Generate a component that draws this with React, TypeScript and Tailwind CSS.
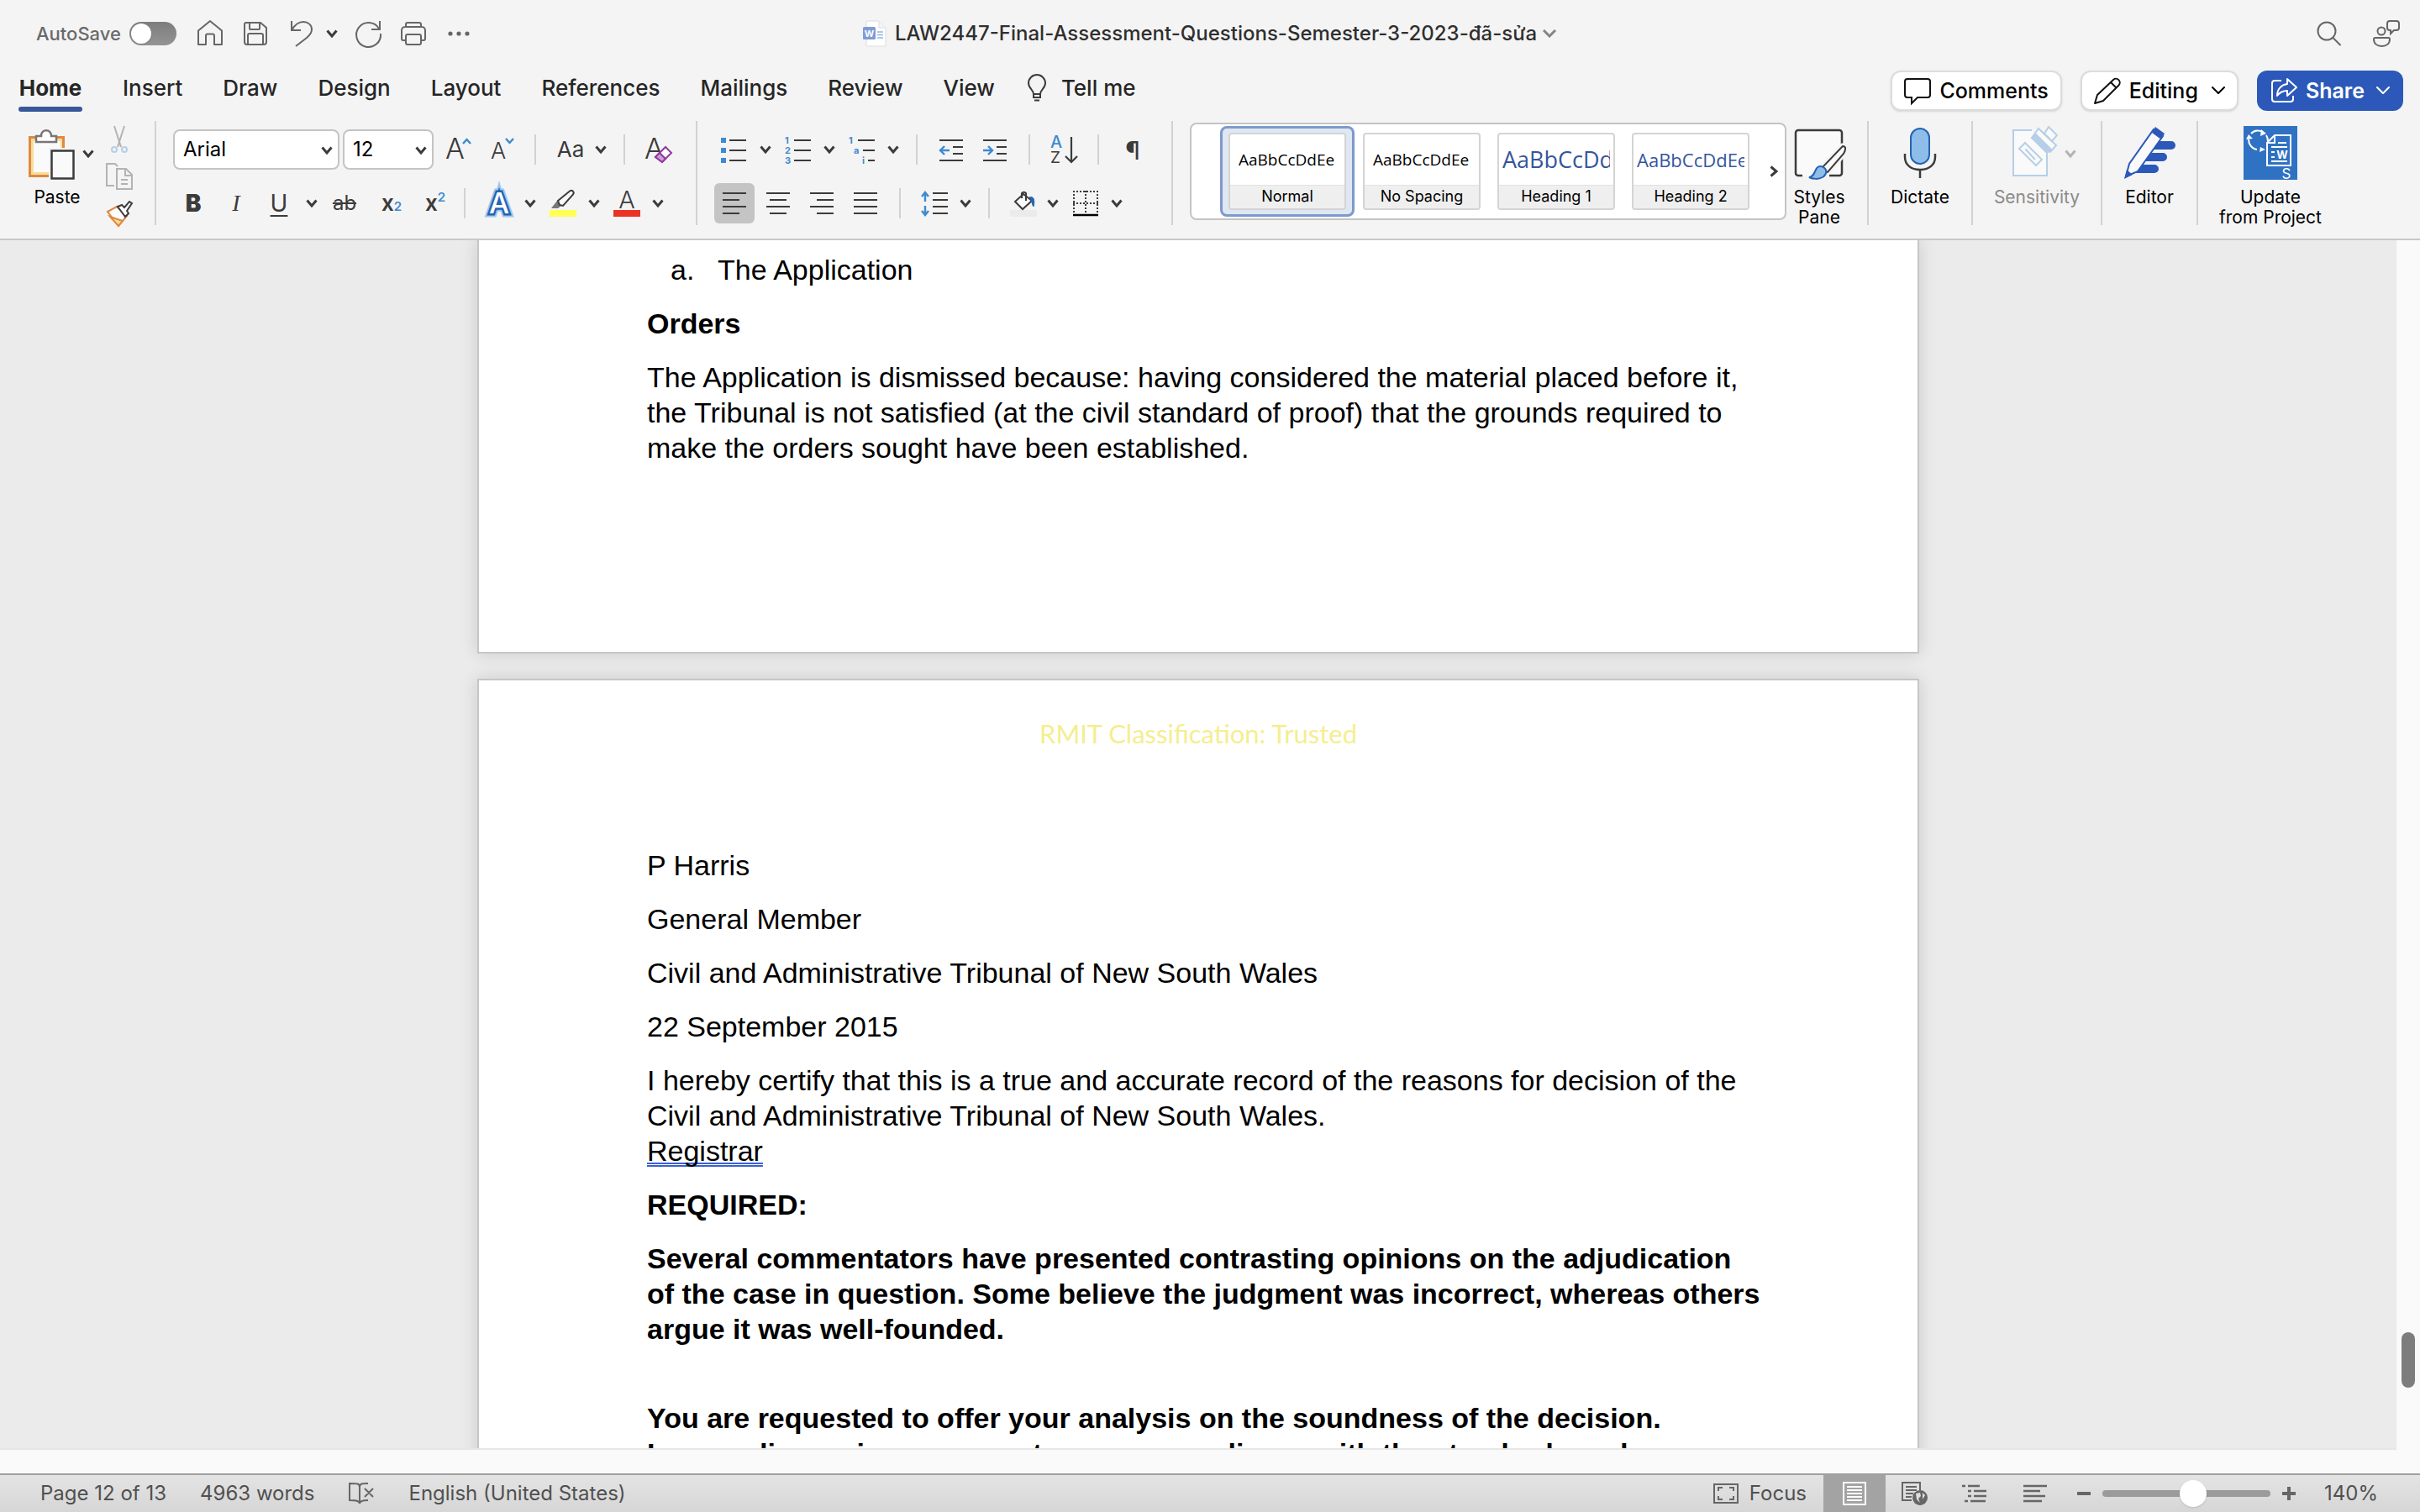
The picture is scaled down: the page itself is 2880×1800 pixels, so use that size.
import React, { useState } from 'react';

type IconProps = { children: React.ReactNode; className?: string; box?: string };

const Icon: React.FC<IconProps> = ({ children, className = 'w-8 h-8', box = '0 0 32 32' }) => (
    <svg className={`shrink-0 overflow-visible ${className}`} viewBox={box} fill="none" stroke="#3b3b3b" strokeWidth={2}>
        {children}
    </svg>
);

const Chevron: React.FC<{ className?: string }> = ({ className = 'text-[#3b3b3b]' }) => (
    <svg className={`w-3.5 h-2.5 shrink-0 ${className}`} viewBox="0 0 14 10" fill="none" stroke="currentColor" strokeWidth={3}>
        <path d="M1.5 1.5 7 8 12.5 1.5" />
    </svg>
);

const ThinChevron: React.FC = () => (
    <svg className="w-4 h-2.5 shrink-0" viewBox="0 0 16 10" fill="none" stroke="currentColor" strokeWidth={2}>
        <path d="M1 1l7 7 7-7" strokeLinecap="round" strokeLinejoin="round" />
    </svg>
);

const Tool: React.FC<{ label: string; className?: string; children: React.ReactNode }> = ({ label, className = '', children }) => (
    <button type="button" aria-label={label} className={`flex shrink-0 items-center justify-center ${className}`}>
        {children}
    </button>
);

const Rule: React.FC<{ className?: string }> = ({ className = '' }) => (
    <div className={`w-0.5 h-9 shrink-0 bg-[#d2d2d2] ${className}`} />
);

const GroupRule: React.FC<{ className?: string }> = ({ className = '' }) => (
    <div className={`w-0.5 h-[124px] shrink-0 bg-[#d2d2d2] ${className}`} />
);

const tabs = ['Insert', 'Draw', 'Design', 'Layout', 'References', 'Mailings', 'Review', 'View'];

const TitleBar: React.FC = () => {
    const [autoSave, setAutoSave] = useState(false);

    return (
        <div className="grid grid-cols-[1fr_auto_1fr] h-20 items-center">
            <div className="flex items-center pl-[43px]">
                <label htmlFor="autosave" className="w-[111px] text-[22px] font-medium text-[#6a6a6a]">AutoSave</label>
                <input
                    id="autosave"
                    type="checkbox"
                    role="switch"
                    checked={autoSave}
                    onChange={(e) => setAutoSave(e.target.checked)}
                    className="appearance-none w-14 h-7 rounded-full bg-linear-to-b from-[#7d7d7d] to-[#949494] p-0.5 before:block before:size-6 before:rounded-full before:bg-white before:shadow checked:before:translate-x-7"
                />
                <Tool label="Home" className="ml-6">
                    <Icon><path stroke="#666" d="M2 29V12.5L16 1l14 11.500V29h-9V18.500a2 2 0 0 0-2-2h-6a2 2 0 0 0-2 2V29z" strokeLinejoin="round" /></Icon>
                </Tool>
                <Tool label="Save" className="ml-[22px]">
                    <Icon>
                        <path stroke="#666" d="M5 3h17l7 6v17a3 3 0 0 1-3 3H6a3 3 0 0 1-3-3V5a2 2 0 0 1 2-2zM9 3v7a1 1 0 0 0 1 1h10a1 1 0 0 0 1-1V3M7 29V18a2 2 0 0 1 2-2h14a2 2 0 0 1 2 2v11" />
                    </Icon>
                </Tool>
                <Tool label="Undo" className="ml-6">
                    <Icon><path stroke="#666" d="M3 1v11h11M3 12C7 5 12 2 17 2c6 0 10 4 10 9 0 5-3 7-6 10L8 31" /></Icon>
                </Tool>
                <Tool label="Undo history" className="ml-3"><Chevron /></Tool>
                <Tool label="Redo" className="ml-5">
                    <Icon><path stroke="#666" d="M30 1v10H20M29 10A14.5 14.5 0 1 0 31 16" /></Icon>
                </Tool>
                <Tool label="Print" className="ml-[22px]">
                    <Icon>
                        <path stroke="#666" d="M7 8V5a2 2 0 0 1 2-2h14a2 2 0 0 1 2 2v3M7 24H4a2 2 0 0 1-2-2V12a4 4 0 0 1 4-4h20a4 4 0 0 1 4 4v10a2 2 0 0 1-2 2h-3M9 17h14a2 2 0 0 1 2 2v8a2 2 0 0 1-2 2H9a2 2 0 0 1-2-2v-8a2 2 0 0 1 2-2z" />
                    </Icon>
                </Tool>
                <Tool label="More" className="ml-[22px]">
                    <Icon><g fill="#666" stroke="none"><circle cx="6" cy="16" r="2.6" /><circle cx="16" cy="16" r="2.6" /><circle cx="26" cy="16" r="2.6" /></g></Icon>
                </Tool>
            </div>

            <button type="button" className="flex items-center text-[24px] font-medium text-[#2f2f2f]">
                <svg className="w-7 h-8 mr-2.5" viewBox="0 0 28 32">
                    <path d="M4 1h15l8 8v22H4z" fill="#fff" stroke="#ddd" />
                    <path d="M19 1v8h8" fill="#f4f4f4" stroke="#ddd" />
                    <path d="M17 14h7M17 17.500h7M17 21h7" stroke="#8fb4ea" strokeWidth="1.5" />
                    <rect x="0" y="8" width="15" height="15" rx="1.5" fill="#7f9cd6" />
                    <text x="7.5" y="19.5" textAnchor="middle" fontSize="11" fontWeight="700" fill="#fff">W</text>
                </svg>
                LAW2447-Final-Assessment-Questions-Semester-3-2023-đã-sửa
                <svg className="w-[18px] h-2.5 ml-1.5" viewBox="0 0 18 10" fill="none" stroke="#858585" strokeWidth="3">
                    <path d="M2 1l7 7 7-7" />
                </svg>
            </button>

            <div className="flex items-center justify-end pr-6">
                <Tool label="Search">
                    <Icon><circle cx="13" cy="13" r="10.5" stroke="#666" /><path stroke="#666" d="M20.5 21l9 9" /></Icon>
                </Tool>
                <Tool label="Account and feedback" className="ml-9">
                    <Icon>
                        <g stroke="#666">
                            <circle cx="10" cy="13" r="4.5" />
                            <path d="M1 22.5a1.5 1.5 0 0 1 1.5-1.5h16a1.5 1.5 0 0 1 1.500 1.5C20 28 16 31 10.5 31S1 28 1 22.5z" />
                            <path d="M20 1h8a3 3 0 0 1 3 3v5a3 3 0 0 1-3 3h-3l-4 4v-4h-1a3 3 0 0 1-3-3V4a3 3 0 0 1 3-3z" />
                        </g>
                    </Icon>
                </Tool>
            </div>
        </div>
    );
};

const TabBar: React.FC = () => (
    <div className="flex h-16 items-start justify-between pl-[22px] pr-5 text-[26px] leading-[32px]">
        <nav className="flex pt-[9px] gap-12 font-medium text-[#262626]">
            <button type="button" className="flex w-[76px] flex-col items-center font-bold">
                Home
                <span className="mt-1.5 h-1.5 w-full rounded-full bg-[#37579b]" />
            </button>
            {tabs.map((tab) => (
                <button key={tab} type="button" className="h-8">{tab}</button>
            ))}
            <button type="button" className="-ml-2.5 flex h-8 items-center">
                <Icon className="w-6 h-8 mr-[17px]" box="0 0 24 32">
                    <path d="M8 23c0-5-6-7-6-13a10 10 0 0 1 20 0c0 6-6 8-6 13zM8 23v4h8v-4M9 30.5h6" />
                </Icon>
                Tell me
            </button>
        </nav>
        <div className="flex gap-[22px] pt-1 font-medium text-black">
            <button type="button" className="flex h-12 items-center gap-2.5 rounded-xl border-2 border-[#dcdcdc] bg-white px-[14px] text-[25px] shadow-sm">
                <Icon><path stroke="#111" d="M4 2h24a3 3 0 0 1 3 3v16a3 3 0 0 1-3 3H16l-7 7v-7H4a3 3 0 0 1-3-3V5a3 3 0 0 1 3-3z" /></Icon>
                Comments
            </button>
            <button type="button" className="flex h-12 items-center gap-2.5 rounded-xl border-2 border-[#dcdcdc] bg-white px-[14px] text-[25px] shadow-sm">
                <Icon><path stroke="#111" d="M1 31l3-10L23 3a4.600 4.600 0 0 1 6.500 6.500L11 28zM20 6l6.500 6.500" strokeLinejoin="round" /></Icon>
                Editing
                <span className="ml-1.5"><ThinChevron /></span>
            </button>
            <button type="button" className="flex h-12 items-center gap-2.5 rounded-xl bg-[#2c59b9] px-4 text-[25px] font-semibold text-white">
                <Icon>
                    <path stroke="#fff" strokeLinejoin="round" d="M13 4H5a3 3 0 0 0-3 3v19a3 3 0 0 0 3 3h19a3 3 0 0 0 3-3v-4M20 2l11 10-11 10v-6c-6 0-9 2-12 6 0-8 5-13 12-14z" />
                </Icon>
                Share
                <span className="ml-1"><ThinChevron /></span>
            </button>
        </div>
    </div>
);

const ClipboardGroup: React.FC = () => (
    <div className="flex h-[124px] pl-8">
        <button type="button" className="flex w-[70px] flex-col pt-2.5 pl-0.5 text-[21px] leading-6 text-black">
            <Icon className="w-14 h-[62px]" box="0 0 56 62">
                <path d="M1.5 9.500h40v46h-40z" fill="#f5dd9c" stroke="#e0883e" strokeWidth="3" />
                <path d="M6 14h32v37H6z" fill="#fafafa" stroke="none" />
                <path d="M9 15V8h6c0-9 12-9 12 0h6v7z" fill="#fff" stroke="#797774" strokeWidth="2.5" />
                <path d="M24 22h32v40H24z" fill="#f4f4f4" stroke="none" />
                <path d="M27.5 25.500h26v33h-26z" fill="#fafafa" strokeWidth="2.5" />
            </Icon>
            <span className="mt-[7px] self-center">Paste</span>
        </button>
        <Tool label="Paste options" className="-ml-1 h-[78px]"><Chevron /></Tool>
        <div className="ml-3.5 flex flex-col gap-3 pt-1.5">
            <Tool label="Cut">
                <Icon>
                    <path stroke="#b3b3b3" d="M10 0l8 25M22 0l-8 25" />
                    <circle cx="10" cy="28" r="3" stroke="#b5cfe8" /><circle cx="22" cy="28" r="3" stroke="#b5cfe8" />
                </Icon>
            </Tool>
            <Tool label="Copy">
                <Icon>
                    <path stroke="#b3b3b3" d="M10 27H1V1h10l3 3M13 7h11l7 7v17H13zM23 7v8h8M18 20h8M18 25h8" />
                </Icon>
            </Tool>
            <Tool label="Format painter">
                <Icon>
                    <path d="M2 14l11-6 12 11-10 12z" fill="#fff" stroke="#e0883e" />
                    <path d="M5 20l15 5-5 6z" fill="#f5dd9c" stroke="#e0883e" />
                    <path d="M14 8l5-2 3 3 6-7 3 2-6 9 2 3-4 4z" fill="#fff" />
                </Icon>
            </Tool>
        </div>
    </div>
);

const FontGroup: React.FC = () => (
    <div className="flex flex-col ml-5 text-[#3b3b3b]">
        <div className="flex h-[68px] items-center">
            <div className="relative mr-1">
                <select aria-label="Font" defaultValue="Arial" className="appearance-none w-[198px] h-12 rounded-lg border-2 border-[#c4c4c4] bg-white pl-2.5 text-[24px] text-black">
                    <option>Arial</option>
                    <option>Calibri</option>
                </select>
                <span className="pointer-events-none absolute right-2 top-5"><Chevron /></span>
            </div>
            <div className="relative">
                <select aria-label="Font size" defaultValue="12" className="appearance-none w-[108px] h-12 rounded-lg border-2 border-[#c4c4c4] bg-white pl-2.5 text-[24px] text-black">
                    <option>12</option>
                    <option>14</option>
                </select>
                <span className="pointer-events-none absolute right-2 top-5"><Chevron /></span>
            </div>
            <Tool label="Grow font" className="ml-3.5">
                <Icon>
                    <text x="0" y="27" fontSize="34" fontWeight="300" fill="#3b3b3b" stroke="none">A</text>
                    <path stroke="#3d8bd0" strokeWidth="2.5" d="M21 9l4.500-5L30 9" />
                </Icon>
            </Tool>
            <Tool label="Shrink font" className="ml-[22px]">
                <Icon>
                    <text x="0" y="27" fontSize="27" fontWeight="300" fill="#3b3b3b" stroke="none">A</text>
                    <path stroke="#3d8bd0" strokeWidth="2.5" d="M18 3l4.500 5L27 3" />
                </Icon>
            </Tool>
            <Rule className="ml-5" />
            <Tool label="Change case" className="ml-6 gap-3 text-[26px] leading-8"><span className="w-[34px]">Aa</span><Chevron /></Tool>
            <Rule className="ml-5" />
            <Tool label="Clear formatting" className="ml-6">
                <Icon>
                    <text x="-1" y="27" fontSize="34" fontWeight="300" fill="#3b3b3b" stroke="none">A</text>
                    <path stroke="#8f3a9c" d="M12 25L24 13l7 7-11 11z" fill="#fff" /><path stroke="#8f3a9c" fill="#d39ad9" d="M12 25l5-5 7 7-4 4z" />
                </Icon>
            </Tool>
        </div>
        <div className="mt-3 flex h-9 items-center text-[28px] leading-9">
            <Tool label="Bold" className="w-12 font-bold"><b>B</b></Tool>
            <Tool label="Italic" className="w-[54px]"><i className="font-['Liberation_Serif',serif]">I</i></Tool>
            <Tool label="Underline" className="w-9 ml-1.5"><u className="decoration-2 underline-offset-4">U</u></Tool>
            <Tool label="Underline options" className="ml-3.5"><Chevron /></Tool>
            <Tool label="Strikethrough" className="ml-4 w-8 text-[24px]"><s>ab</s></Tool>
            <Tool label="Subscript" className="ml-[26px] w-7">
                <span className="text-[26px] font-semibold">x</span><sub className="text-[15px] font-semibold text-[#3d8bd0]">2</sub>
            </Tool>
            <Tool label="Superscript" className="ml-6 w-7">
                <span className="text-[26px] font-semibold">x</span><sup className="text-[15px] font-semibold text-[#3d8bd0]">2</sup>
            </Tool>
            <Rule className="ml-5" />
            <Tool label="Text effects" className="ml-6">
                <Icon>
                    <g fontSize="34" fontWeight="500" textAnchor="middle">
                        <text x="16" y="28" stroke="#9dc8ee" strokeWidth="9">A</text>
                        <text x="16" y="28" stroke="#2563b3" strokeWidth="5">A</text>
                        <text x="16" y="28" fill="#fff" stroke="none">A</text>
                    </g>
                </Icon>
            </Tool>
            <Tool label="Text effects options" className="ml-3.5"><Chevron /></Tool>
            <Tool label="Highlight" className="ml-4">
                <Icon>
                    <path fill="#ffff54" stroke="none" d="M0 24h32v8H0z" />
                    <path fill="#797774" stroke="none" d="M2 22l7-9 5 6-4 3z" />
                    <path fill="#fafafa" d="M10 13L24 1.500c3-2 6 1 4 4L16 19l-4-1z" />
                </Icon>
            </Tool>
            <Tool label="Highlight options" className="ml-3.5"><Chevron /></Tool>
            <Tool label="Font colour" className="ml-4">
                <Icon>
                    <path fill="#eb3323" stroke="none" d="M0 24h32v8H0z" />
                    <text x="16" y="22" fontSize="29" fontWeight="300" textAnchor="middle" fill="#3b3b3b" stroke="none">A</text>
                </Icon>
            </Tool>
            <Tool label="Font colour options" className="ml-3.5"><Chevron /></Tool>
        </div>
    </div>
);

const ParagraphGroup: React.FC = () => (
    <div className="flex flex-col ml-5">
        <div className="flex h-[68px] items-center pl-2">
            <Tool label="Bullets">
                <Icon><path fill="#3d8bd0" stroke="none" d="M0 2h6v6H0zM0 14h6v6H0zM0 26h6v6H0z" /><path strokeWidth="2.2" d="M10 5h20M10 17h20M10 29h20" /></Icon>
            </Tool>
            <Tool label="Bullet options" className="ml-3.5"><Chevron /></Tool>
            <Tool label="Numbering" className="ml-4">
                <Icon>
                    <g fill="#3d8bd0" stroke="none" fontSize="11" fontWeight="700"><text x="0" y="9">1</text><text x="0" y="21">2</text><text x="0" y="33">3</text></g>
                    <path strokeWidth="2.2" d="M11 5h20M11 17h20M11 29h20" />
                </Icon>
            </Tool>
            <Tool label="Numbering options" className="ml-3.5"><Chevron /></Tool>
            <Tool label="Multilevel list" className="ml-4">
                <Icon>
                    <g fill="#3d8bd0" stroke="none" fontSize="11" fontWeight="700"><text x="0" y="9">1</text><text x="6" y="21">a</text><text x="16" y="33">i</text></g>
                    <path strokeWidth="2.2" d="M11 5h20M17 17h14M23 29h8" />
                </Icon>
            </Tool>
            <Tool label="Multilevel options" className="ml-3.5"><Chevron /></Tool>
            <Rule className="ml-5" />
            <Tool label="Decrease indent" className="ml-6">
                <Icon><path strokeWidth="2.2" d="M2 5h28M18 13h12M18 21h12M2 29h28" /><path stroke="#3d8bd0" strokeWidth="2.4" d="M14 17H3M8 12l-5 5 5 5" /></Icon>
            </Tool>
            <Tool label="Increase indent" className="ml-5">
                <Icon><path strokeWidth="2.2" d="M2 5h28M18 13h12M18 21h12M2 29h28" /><path stroke="#3d8bd0" strokeWidth="2.4" d="M2 17h11M8 12l5 5-5 5" /></Icon>
            </Tool>
            <Rule className="ml-6" />
            <Tool label="Sort" className="ml-6">
                <Icon>
                    <text x="0" y="14" fontSize="20" fontWeight="500" fill="#3d8bd0" stroke="none">A</text>
                    <text x="0" y="32" fontSize="19" fontWeight="400" fill="#3b3b3b" stroke="none">Z</text>
                    <path strokeWidth="2.2" d="M25 1v29M18 24l7 7 7-7" />
                </Icon>
            </Tool>
            <Rule className="ml-6" />
            <Tool label="Show formatting marks" className="ml-[26px] w-7">
                <Icon className="w-7 h-8" box="0 0 28 32">
                    <text x="14" y="28" fontSize="30" textAnchor="middle" fill="#3b3b3b" stroke="none">¶</text>
                </Icon>
            </Tool>
        </div>
        <div className="mt-3 flex h-9 items-center">
            <Tool label="Align left" className="size-12 rounded-md bg-[#c4c4c4]">
                <Icon><path strokeWidth="2.2" d="M2 4h28M2 12h20M2 20h28M2 28h20" /></Icon>
            </Tool>
            <Tool label="Align centre" className="ml-3">
                <Icon><path strokeWidth="2.2" d="M2 4h28M6 12h20M2 20h28M6 28h20" /></Icon>
            </Tool>
            <Tool label="Align right" className="ml-5">
                <Icon><path strokeWidth="2.2" d="M2 4h28M10 12h20M2 20h28M10 28h20" /></Icon>
            </Tool>
            <Tool label="Justify" className="ml-5">
                <Icon><path strokeWidth="2.2" d="M2 4h28M2 12h28M2 20h28M2 28h28" /></Icon>
            </Tool>
            <Rule className="ml-6" />
            <Tool label="Line spacing" className="ml-6">
                <Icon>
                    <path strokeWidth="2.2" d="M14 4h18M14 12h18M14 20h18M14 28h18" />
                    <path stroke="#3d8bd0" strokeWidth="2.4" d="M5 14V3M1 8l4-5 4 5M5 19v11M1 25l4 5 4-5" />
                </Icon>
            </Tool>
            <Tool label="Line spacing options" className="ml-3.5"><Chevron /></Tool>
            <Rule className="ml-5" />
            <Tool label="Shading" className="ml-6">
                <Icon>
                    <path fill="#ebebeb" stroke="none" d="M0 24h32v8H0z" />
                    <path d="M16 5L6 14l9 9 11-10zM14 10V4a3 3 0 0 1 5 0v9" fill="#fafafa" /><path d="M23 9c5-2 7 3 5 11-2-2-1-6-5-11z" fill="#2563b3" stroke="#2563b3" strokeWidth="1" />
                </Icon>
            </Tool>
            <Tool label="Shading options" className="ml-3"><Chevron /></Tool>
            <Tool label="Borders" className="ml-4">
                <Icon>
                    <path strokeDasharray="2 2" d="M1 2h30M1 16h30M2 1v26M16 1v26M30 1v26" /><path stroke="#000" d="M1 30h30" strokeWidth="2.5" />
                </Icon>
            </Tool>
            <Tool label="Border options" className="ml-3.5"><Chevron /></Tool>
        </div>
    </div>
);

const styleCards = [
    { name: 'Normal', sample: 'AaBbCcDdEe', look: 'pl-1.5 text-[19px] text-black' },
    { name: 'No Spacing', sample: 'AaBbCcDdEe', look: 'pl-1.5 text-[19px] text-black' },
    { name: 'Heading 1', sample: 'AaBbCcDdEe', look: 'text-[27px] text-[#35569c]' },
    { name: 'Heading 2', sample: 'AaBbCcDdEe', look: 'text-[22px] text-[#35569c]' },
];

const StyleGallery: React.FC = () => {
    const [selected, setSelected] = useState('Normal');

    return (
        <div className="flex h-[116px] shrink-0 items-center rounded-lg border-2 border-[#c4c4c4] bg-white ml-5 mt-0.5 pl-[34px] pr-2">
            {styleCards.map((card) => (
                <button
                    key={card.name}
                    type="button"
                    onClick={() => setSelected(card.name)}
                    className={`w-40 h-[108px] rounded-lg border-[3px] px-[7px] py-[5px] ${selected === card.name ? 'border-[#7d9aca] bg-[#dfe7f2]' : 'border-transparent'}`}
                >
                    <span className="flex h-[92px] flex-col overflow-hidden rounded border-2 border-[#d4d4d4] bg-white">
                        <span className={`flex h-[60px] items-center overflow-hidden whitespace-nowrap mx-1 font-['Open_Sans',sans-serif] ${card.look}`}>{card.sample}</span>
                        <span className="flex-1 border-t border-[#e2e2e2] bg-[#efefef] text-[18px] leading-[26px] text-black">{card.name}</span>
                    </span>
                </button>
            ))}
            <Tool label="More styles" className="ml-[14px]">
                <svg className="w-2.5 h-3.5" viewBox="0 0 10 14" fill="none" stroke="#3b3b3b" strokeWidth="3"><path d="M1.5 1.500L8 7l-6.500 5.500" /></svg>
            </Tool>
        </div>
    );
};

const BigTool: React.FC<{ lines: string[]; className: string; children: React.ReactNode }> = ({ lines, className, children }) => (
    <button type="button" className={`flex shrink-0 flex-col items-center pt-1.5 text-[21px] leading-6 ${className}`}>
        <span className="flex h-[73px] items-start">{children}</span>
        {lines.map((line) => <span key={line} className="whitespace-nowrap">{line}</span>)}
    </button>
);

const Ribbon: React.FC = () => (
    <div className="flex h-[142px] border-b-2 border-[#c8c8c8]">
        <ClipboardGroup />
        <GroupRule className="ml-[26px]" />
        <FontGroup />
        <GroupRule className="ml-7" />
        <ParagraphGroup />
        <GroupRule className="ml-8" />
        <StyleGallery />
        <BigTool lines={['Styles', 'Pane']} className="w-[78px] text-black">
            <Icon className="w-16 h-[68px]" box="0 0 64 68">
                <path fill="#fafafa" strokeWidth="2.5" d="M12 59H7a3 3 0 0 1-3-3V8a3 3 0 0 1 3-3h49a3 3 0 0 1 3 3v48a3 3 0 0 1-3 3H44" />
                <path fill="#fafafa" stroke="#f4f4f4" strokeWidth="7" d="M60 24c4 0 4 4 1 9L42 55l-7-5z" />
                <path fill="#fafafa" d="M60 24c4 0 4 4 1 9L42 55l-7-5z" />
                <path fill="#8fbde9" stroke="#2563b3" d="M20 61c8 0 6-14 14-13 8 2 8 9 2 13-5 3-12 2-16 0z" />
            </Icon>
        </BigTool>
        <GroupRule className="ml-[18px]" />
        <BigTool lines={['Dictate']} className="w-[122px] text-black">
            <Icon className="w-10 h-[64px]" box="0 0 40 64">
                <rect x="9" y="3" width="22" height="42" rx="11" fill="#8fbde9" stroke="#2563b3" />
                <path strokeWidth="2.5" d="M2 33v4c0 9 7 15 18 15s18-6 18-15v-4M20 52v10" />
            </Icon>
        </BigTool>
        <GroupRule />
        <BigTool lines={['Sensitivity']} className="w-[152px] text-[#8a8a8a]">
            <Icon className="w-14 h-[64px] ml-4" box="0 0 56 64">
                <g stroke="#b5cfe8" strokeWidth="2">
                    <path fill="#fafafa" d="M25 5H3v54h40V33" />
                    <path fill="#fafafa" d="M17 20l20 20-7 7-20-20zM17.500 27.500L29 40" />
                    <path fill="#fafafa" d="M33 3l21 20-7 8-22-17z" />
                    <path fill="#b5cfe8" d="M25 14l5-4 18 18-5 4z" />
                    <path fill="#fafafa" d="M40 9l5-8 10 10-6 7z" />
                </g>
            </Icon>
            <span className="ml-2 mt-7"><Chevron className="text-[#b3b3b3]" /></span>
        </BigTool>
        <GroupRule />
        <BigTool lines={['Editor']} className="w-28 text-black">
            <Icon className="w-16 h-[64px]" box="0 0 64 64">
                <path fill="#2c59b9" stroke="none" d="M32 18h26a5 5 0 0 1 0 10H28zM26 32h22a5 5 0 0 1 0 10H22zM20 46h18a5 5 0 0 1 0 10H14z" />
                <path fill="#fafafa" stroke="#2c59b9" d="M37 4l11 8-30 42-14 6 4-15z" />
                <path fill="#2c59b9" stroke="none" d="M39 1l11 8-4 7-11-8zM2 63l3-11 7 6z" />
            </Icon>
        </BigTool>
        <GroupRule />
        <BigTool lines={['Update', 'from Project']} className="w-[172px] text-black">
            <Icon className="w-16 h-16" box="0 0 64 64">
                <path fill="#2f72c4" stroke="none" d="M0 0h64v64H0z" />
                <g stroke="#fff">
                    <path d="M9 9a11 11 0 0 1 15-1M27 11c2 3 2 5 2 7M16 28c-6-1-10-6-10-12" />
                    <path fill="#fff" stroke="none" d="M21 4l6 5-7 3zM3 16l3-6 5 5zM20 25l-1 6 7-3z" />
                    <path d="M28 47V20l9-9h19v36zM37 11v9h-9M41 20h10M33 25h19M33 42h19M33 31h4M33 37h4" />
                </g>
                <text x="46" y="39" fontSize="13" fontWeight="700" textAnchor="middle" fill="#fff" stroke="none">W</text>
                <text x="51" y="63" fontSize="17" textAnchor="middle" fill="#fff" stroke="none">S</text>
            </Icon>
        </BigTool>
    </div>
);

const page = "w-[1716px] mx-auto shrink-0 bg-white border-[#c6c6c6] shadow-[0_0_20px_rgba(0,0,0,0.14)] px-[200px]";

const DocumentArea: React.FC = () => (
    <main className="flex min-h-0 flex-1 bg-[#ebebeb]">
        <div className="flex min-w-0 flex-1 flex-col gap-[30px] overflow-hidden border-b-2 border-[#e6e6e6] font-['Liberation_Sans',sans-serif] text-[34px] leading-[42px] text-black">
            <article className={`${page} flex flex-col gap-[22px] border-x-2 border-b-2 pt-3.5 pb-[222px]`}>
                <p className="pl-7"><span className="inline-block w-14">a.</span>The Application</p>
                <h2 className="font-bold">Orders</h2>
                <p>
                    The Application is dismissed because: having considered the material placed before it,<br />
                    the Tribunal is not satisfied (at the civil standard of proof) that the grounds required to<br />
                    make the orders sought have been established.
                </p>
            </article>
            <article className={`${page} flex flex-col gap-[22px] border-2 pt-[42px] whitespace-nowrap`}>
                <header className="mb-[93px] text-center font-['Lato',sans-serif] text-[31px] text-[#f5ee90]">RMIT Classification: Trusted</header>
                <p>P Harris</p>
                <p>General Member</p>
                <p>Civil and Administrative Tribunal of New South Wales</p>
                <p>22 September 2015</p>
                <p>
                    I hereby certify that this is a true and accurate record of the reasons for decision of the<br />
                    Civil and Administrative Tribunal of New South Wales.<br />
                    <span className="underline decoration-double decoration-2 decoration-[#3b62d2] underline-offset-2 [text-decoration-skip-ink:none]">Registrar</span>
                </p>
                <p className="font-bold">REQUIRED:</p>
                <p className="font-bold">
                    Several commentators have presented contrasting opinions on the adjudication<br />
                    of the case in question. Some believe the judgment was incorrect, whereas others<br />
                    argue it was well-founded.<br />
                    <br />
                </p>
                <p className="font-bold">
                    You are requested to offer your analysis on the soundness of the decision.<br />
                    In your discussion, you must ensure compliance with the standards and
                </p>
            </article>
        </div>
        <div className="w-7 shrink-0 bg-[#fafafa] pl-1.5 pt-[1300px]">
            <div className="w-4 h-[66px] rounded-full bg-[#7d7d7d]" />
        </div>
    </main>
);

const StatusBar: React.FC = () => {
    const [zoom, setZoom] = useState(55);

    return (
        <footer className="flex h-[46px] shrink-0 items-center border-t-2 border-[#a0a0a0] bg-linear-to-b from-[#e4e4e4] to-[#d6d6d6] pl-12 pr-[50px] text-[24px] text-[#505050]">
            <button type="button">Page 12 of 13</button>
            <button type="button" className="ml-10">4963 words</button>
            <Tool label="Proofing" className="ml-10">
                <Icon><g stroke="#666"><path d="M14 28c0-3-3-4-12-4V4c9 0 12 0 12 4zM14 8c0-4 3-4 10-4M14 28c0-3 3-4 10-4M20 10l10 10M30 10L20 20" /></g></Icon>
            </Tool>
            <button type="button" className="ml-10">English (United States)</button>
            <button type="button" className="ml-auto flex items-center gap-3">
                <Icon className="w-8 h-7" box="0 0 32 28"><g stroke="#666"><path d="M2 3h28v22H2z" /><path d="M7 11V7h5M20 7h5v4M25 17v4h-5M12 21H7v-4" /></g></Icon>
                Focus
            </button>
            <Tool label="Print layout" className="ml-5 w-[74px] h-11 bg-[#a3a3a3]">
                <Icon><path stroke="#fff" d="M3 3h26v26H3zM7 8h18M7 12h18M7 16h18M7 20h18M7 24h18" /></Icon>
            </Tool>
            <Tool label="Web layout" className="ml-[18px]">
                <Icon>
                    <path stroke="#666" d="M13 24H2V3h21v9M6 8h13M6 12h13M6 16h9M6 20h7" /><circle cx="23" cy="21" r="9" fill="#666" stroke="none" />
                    <path fill="#ddd" stroke="none" d="M18 16l5-1 1 4-3 3 2 5-4-4zM26 15l3 3-3 5z" />
                </Icon>
            </Tool>
            <Tool label="Outline" className="ml-10">
                <Icon><path stroke="#666" strokeWidth="2.5" d="M1 7h4M8 7h14M8 13h4M15 13h15M8 19h4M15 19h15M4 25h4M11 25h18" /></Icon>
            </Tool>
            <Tool label="Draft" className="ml-10">
                <Icon><path stroke="#666" strokeWidth="2.5" d="M2 7h28M2 13h20M2 19h26M2 25h22" /></Icon>
            </Tool>
            <Tool label="Zoom out" className="ml-8 w-5 h-8">
                <Icon className="w-4 h-4" box="0 0 16 16"><path stroke="#666" strokeWidth="4" d="M0 8h16" /></Icon>
            </Tool>
            <input
                type="range"
                aria-label="Zoom"
                value={zoom}
                onChange={(e) => setZoom(Number(e.target.value))}
                className="ml-3 w-[200px] h-2 appearance-none rounded-full bg-[#9b9b9b] [&::-webkit-slider-thumb]:appearance-none [&::-webkit-slider-thumb]:size-8 [&::-webkit-slider-thumb]:rounded-full [&::-webkit-slider-thumb]:bg-white [&::-webkit-slider-thumb]:shadow"
            />
            <Tool label="Zoom in" className="ml-3 w-5 h-8">
                <Icon className="w-4 h-4" box="0 0 16 16"><path stroke="#666" strokeWidth="4" d="M0 8h16M8 0v16" /></Icon>
            </Tool>
            <button type="button" className="ml-8">140%</button>
        </footer>
    );
};

const App: React.FC = () => (
    <div className="flex h-screen flex-col overflow-hidden bg-[#f4f4f4] font-['Inter',sans-serif]">
        <header className="shrink-0">
            <TitleBar />
            <TabBar />
            <Ribbon />
        </header>
        <DocumentArea />
        <div className="h-7 shrink-0 bg-[#fafafa]" />
        <StatusBar />
    </div>
);

export default App;
